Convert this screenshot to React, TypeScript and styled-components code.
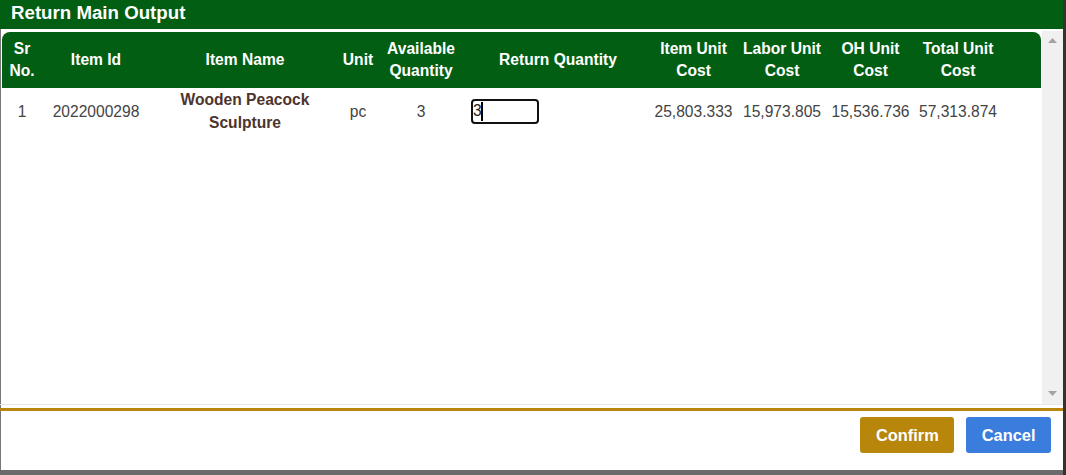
import React from "react";
import styled, { createGlobalStyle } from "styled-components";

const GlobalStyle = createGlobalStyle`
  html, body {
    margin: 0;
    padding: 0;
    background: #6b6b6b;
    font-family: "Liberation Sans", Arial, sans-serif;
  }
  #root {
    width: 1066px;
    height: 475px;
    overflow: hidden;
  }
`;

const Backdrop = styled.div`
  display: flex;
  width: 1066px;
  height: 475px;
  background: linear-gradient(to right, transparent 1063px, #3a2f2f 1063px);
`;

const Modal = styled.div`
  display: flex;
  flex-direction: column;
  width: 1063px;
  height: 470px;
  background: #ffffff;
  box-shadow: inset 1px 0 0 #777777;
`;

const TitleBar = styled.div`
  height: 29px;
  flex: none;
  background: #025e12;
  color: #ffffff;
  font-weight: bold;
  font-size: 18.7px;
  line-height: 25px;
  padding-left: 11px;
  margin-bottom: 2px;
`;

const ScrollArea = styled.div`
  display: flex;
  height: 373px;
  flex: none;
  border-bottom: 1px solid #e8e8e8;
  padding-left: 2px;
`;

const TableWrap = styled.div`
  flex: 1;
  padding-top: 1px;
  overflow: hidden;
`;

const ScrollTrack = styled.div`
  width: 21px;
  flex: none;
  background: #f0f0f0;
  display: flex;
  flex-direction: column;
  justify-content: space-between;
  align-items: center;
  padding: 7px 0 8px;
  box-sizing: border-box;
`;

const Arrow = styled.svg`
  display: block;
`;

const Table = styled.table`
  width: 1039px;
  table-layout: fixed;
  border-collapse: separate;
  border-spacing: 0;
`;

const HeadCell = styled.th`
  background: #025e12;
  color: #ffffff;
  font-weight: bold;
  font-size: 15.6px;
  line-height: 22px;
  padding: 6px 2px;
  text-align: center;
  vertical-align: middle;
  &:first-child {
    border-top-left-radius: 8px;
  }
  &:last-child {
    border-top-right-radius: 8px;
  }
`;

const Cell = styled.td<{ $align?: "left" | "center"; $name?: boolean }>`
  font-size: 15.6px;
  line-height: 23px;
  padding: 0 ${(p) => (p.$align === "left" ? "0 0 5px" : "2px")};
  text-align: ${(p) => p.$align ?? "center"};
  vertical-align: middle;
  color: ${(p) => (p.$name ? "#4e342e" : "#444444")};
  font-weight: ${(p) => (p.$name ? "bold" : "normal")};
  height: 46px;
`;

const QtyBox = styled.span`
  position: relative;
  display: inline-block;
`;

const QtyInput = styled.input`
  display: block;
  width: 68px;
  height: 25px;
  box-sizing: border-box;
  border: 2px solid #111111;
  border-radius: 4px;
  padding: 0;
  font-family: "Liberation Sans", Arial, sans-serif;
  font-size: 15.6px;
  color: #222222;
  outline: none;
  background: #ffffff;
`;

const Caret = styled.span`
  position: absolute;
  left: 10px;
  top: 3px;
  width: 2px;
  height: 19px;
  background: #000000;
`;

const Footer = styled.div`
  flex: 1;
  border-top: 3px solid #b8860b;
  margin-top: 3px;
  display: flex;
  justify-content: flex-end;
  align-items: flex-start;
  gap: 12px;
  padding: 6px 12px 0 0;
`;

const Button = styled.button<{ $tone: "confirm" | "cancel" }>`
  height: 36px;
  padding: 0 15.5px;
  border: none;
  border-radius: 3px;
  background: ${(p) => (p.$tone === "confirm" ? "#b8860b" : "#3a7ddc")};
  color: #ffffff;
  font-family: "Liberation Sans", Arial, sans-serif;
  font-weight: bold;
  font-size: 16.4px;
  cursor: pointer;
`;

const columns: { label: string; width: number }[] = [
  { label: "Sr No.", width: 40 },
  { label: "Item Id", width: 108 },
  { label: "Item Name", width: 190 },
  { label: "Unit", width: 36 },
  { label: "Available Quantity", width: 90 },
  { label: "Return Quantity", width: 184 },
  { label: "Item Unit Cost", width: 87 },
  { label: "Labor Unit Cost", width: 90 },
  { label: "OH Unit Cost", width: 87 },
  { label: "Total Unit Cost", width: 88 },
  { label: "", width: 39 },
];

const rows = [
  {
    sr: 1,
    id: "2022000298",
    name: "Wooden Peacock Sculpture",
    unit: "pc",
    available: 3,
    returnQty: "3",
    itemCost: "25,803.333",
    laborCost: "15,973.805",
    ohCost: "15,536.736",
    totalCost: "57,313.874",
  },
];

export default function App() {
  return (
    <>
      <GlobalStyle />
      <Backdrop>
        <Modal>
          <TitleBar>Return Main Output</TitleBar>
          <ScrollArea>
            <TableWrap>
              <Table>
                <colgroup>
                  {columns.map((c, i) => (
                    <col key={i} style={{ width: c.width }} />
                  ))}
                </colgroup>
                <thead>
                  <tr>
                    {columns.map((c, i) => (
                      <HeadCell key={i}>{c.label}</HeadCell>
                    ))}
                  </tr>
                </thead>
                <tbody>
                  {rows.map((r) => (
                    <tr key={r.sr}>
                      <Cell>{r.sr}</Cell>
                      <Cell>{r.id}</Cell>
                      <Cell $name>{r.name}</Cell>
                      <Cell>{r.unit}</Cell>
                      <Cell>{r.available}</Cell>
                      <Cell $align="left">
                        <QtyBox>
                          <QtyInput readOnly value={r.returnQty} />
                          <Caret />
                        </QtyBox>
                      </Cell>
                      <Cell>{r.itemCost}</Cell>
                      <Cell>{r.laborCost}</Cell>
                      <Cell>{r.ohCost}</Cell>
                      <Cell>{r.totalCost}</Cell>
                      <Cell />
                    </tr>
                  ))}
                </tbody>
              </Table>
            </TableWrap>
            <ScrollTrack>
              <Arrow width="9" height="5" viewBox="0 0 9 5">
                <polygon points="4.5,0 9,5 0,5" fill="#a3a3a3" />
              </Arrow>
              <Arrow width="9" height="5" viewBox="0 0 9 5">
                <polygon points="0,0 9,0 4.5,5" fill="#a3a3a3" />
              </Arrow>
            </ScrollTrack>
          </ScrollArea>
          <Footer>
            <Button $tone="confirm">Confirm</Button>
            <Button $tone="cancel">Cancel</Button>
          </Footer>
        </Modal>
      </Backdrop>
    </>
  );
}
